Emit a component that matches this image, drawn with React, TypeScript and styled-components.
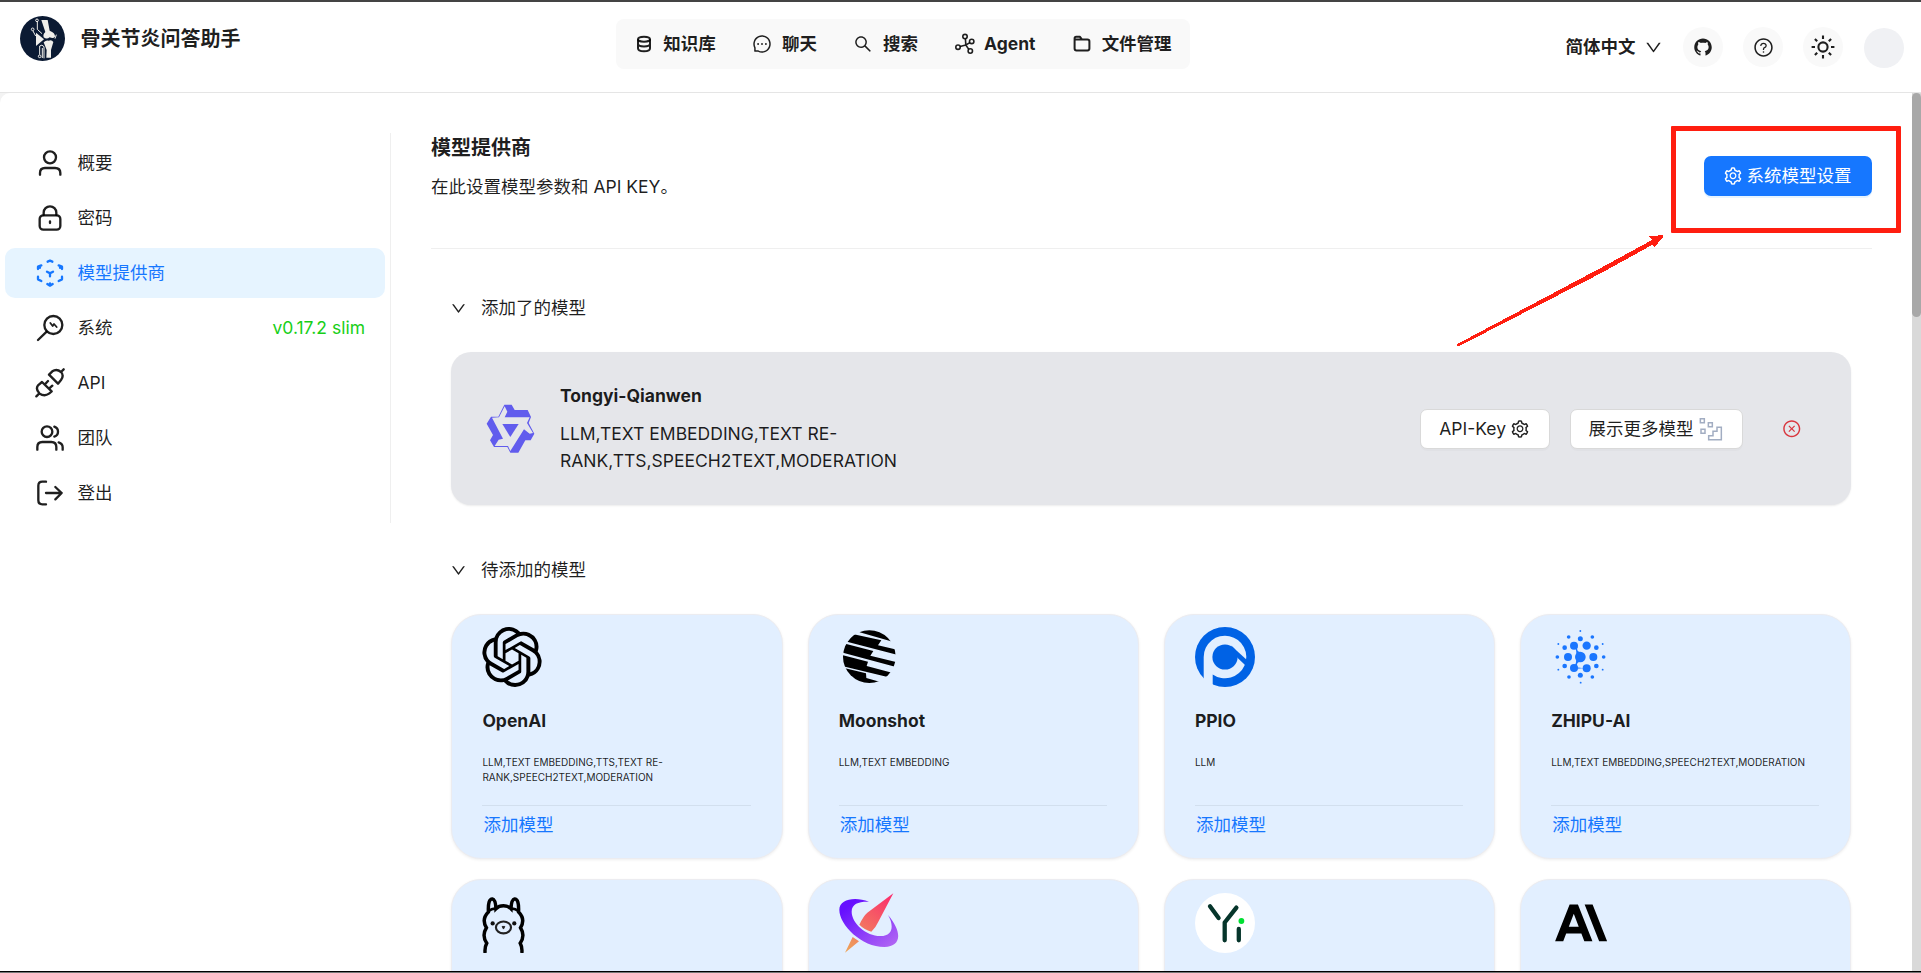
import React from 'react';
import styled, { createGlobalStyle } from 'styled-components';
import {
  AiOutlineMessage,
  AiOutlineSearch,
  AiOutlineDown,
  AiOutlineQuestionCircle,
  AiOutlineSetting,
  AiOutlineCloseCircle,
  AiFillGithub,
} from 'react-icons/ai';
import { SiOpenai } from 'react-icons/si';

const GlobalStyle = createGlobalStyle`
  * { box-sizing: border-box; }
  body {
    margin: 0;
    overflow: hidden;
    background: #fff;
    color: rgba(0, 0, 0, 0.88);
    font-family: Inter, "Noto Sans CJK SC", sans-serif;
    font-size: 17.5px;
    line-height: 27.5px;
  }
  svg { display: block; flex: none; }
`;

const Page = styled.div`
  position: relative;
  display: flex;
  flex-direction: column;
  width: 1921px;
  height: 973px;
  border-top: 2px solid #444;
  overflow: hidden;
`;

const Header = styled.header`
  display: flex;
  flex: none;
  align-items: flex-start;
  height: 91px;
  padding: 0 17px 0 20px;
  border-bottom: 1px solid #e5e5e5;
  background: #fff;
`;

const Brand = styled.div`
  display: flex;
  flex: none;
  align-items: flex-start;
  width: 596px;
  padding-top: 14px;
  gap: 15.5px;
`;

const BrandName = styled.span`
  font-size: 20px;
  font-weight: 600;
  line-height: 47px;
`;

const Nav = styled.nav`
  display: flex;
  flex: none;
  align-items: center;
  gap: 35.3px;
  width: 574px;
  height: 50px;
  margin-top: 17px;
  padding-left: 16.5px;
  border-radius: 8px;
  background: #f9f9f9;
`;

const NavItem = styled.a`
  display: flex;
  align-items: center;
  gap: 8.3px;
  font-weight: 700;
  white-space: nowrap;
`;

const NavIcon = styled.span`
  display: flex;
  align-items: center;
  justify-content: center;
  width: 22.5px;
  height: 22.5px;
`;

const Tools = styled.div`
  display: flex;
  align-items: center;
  gap: 20px;
  height: 90px;
  margin-left: auto;
`;

const Language = styled.div`
  display: flex;
  align-items: center;
  gap: 8.5px;
  font-weight: 600;
`;

const RoundButton = styled.button`
  display: flex;
  align-items: center;
  justify-content: center;
  width: 40px;
  height: 40px;
  padding: 0;
  border: 0;
  border-radius: 50%;
  color: rgba(0, 0, 0, 0.88);
  background: #f9f9f9;
`;

const Avatar = styled.span`
  width: 40px;
  height: 40px;
  margin: 2px 0 0 1px;
  border-radius: 50%;
  background: #f0f1f4;
`;

const Body = styled.div`
  display: flex;
  flex: 1;
  min-height: 0;
  background: #f3f3f3;
`;

const Panel = styled.div`
  display: flex;
  flex: 1;
  min-width: 0;
  border-radius: 10px 0 0 0;
  background: #fff;
`;

const Sidebar = styled.aside`
  display: flex;
  flex: none;
  flex-direction: column;
  gap: 5px;
  width: 391px;
  height: 390px;
  margin-top: 40px;
  padding: 5px 5px 0;
  border-right: 1px solid #efefef;
`;

const MenuItem = styled.div<{ $active?: boolean }>`
  display: flex;
  align-items: center;
  gap: 12.5px;
  height: 50px;
  padding: 0 20px 0 30px;
  border-radius: 10px;
  color: ${(p) => (p.$active ? '#1677ff' : 'rgba(0, 0, 0, 0.88)')};
  background: ${(p) => (p.$active ? '#e6f4ff' : 'transparent')};
`;

const Version = styled.span`
  margin-left: auto;
  color: #17cf17;
`;

const Main = styled.main`
  flex: none;
  width: 1481px;
  padding: 40px 0 0 40px;
`;

const TitleRow = styled.div`
  display: flex;
  justify-content: space-between;
  height: 116px;
  border-bottom: 1px solid #efefef;
`;

const Title = styled.h1`
  margin: 0;
  font-size: 20px;
  font-weight: 600;
  line-height: 30px;
`;

const Subtitle = styled.p`
  margin: 10px 0 0;
`;

const PrimaryButton = styled.button`
  display: flex;
  align-items: center;
  gap: 4px;
  height: 40px;
  margin-top: 23px;
  padding: 0 20.5px 0 18.5px;
  border: 0;
  border-radius: 7px;
  color: #fff;
  background: #1677ff;
  box-shadow: 0 2px 0 rgba(5, 145, 255, 0.1);
  font: inherit;
`;

const SectionHeader = styled.div<{ $top: number }>`
  display: flex;
  align-items: center;
  gap: 14px;
  height: 28px;
  padding: ${(p) => p.$top}px 0 30px 19px;
  box-sizing: content-box;
`;

const AddedCard = styled.section`
  display: flex;
  align-items: center;
  width: 1400px;
  height: 153px;
  margin-left: 20px;
  padding: 0 50px 0 34px;
  border-radius: 20px;
  background: #e5e6ea;
  box-shadow: 0 1px 2px rgba(0, 0, 0, 0.08);
`;

const AddedInfo = styled.div`
  width: 430px;
  margin-left: 25px;
`;

const ProviderName = styled.div`
  font-weight: 700;
`;

const ProviderTags = styled.div`
  margin-top: 10px;
  line-height: 27.75px;
`;

const Actions = styled.div`
  display: flex;
  align-items: center;
  gap: 20px;
  margin-left: auto;
`;

const DefaultButton = styled.button`
  display: flex;
  align-items: center;
  gap: 4px;
  height: 40px;
  padding: 0 18.5px 0 18px;
  border: 1px solid #d9d9d9;
  border-radius: 7px;
  color: rgba(0, 0, 0, 0.88);
  background: #fff;
  box-shadow: 0 2px 0 rgba(0, 0, 0, 0.02);
  font: inherit;
  white-space: nowrap;
`;

const RemoveButton = styled.span`
  display: flex;
  margin-left: 19px;
  color: #d9363e;
`;

const MoreIconSlot = styled.span`
  margin-left: 1.5px;
`;

const Grid = styled.div`
  display: grid;
  grid-template-columns: repeat(4, 331.25px);
  grid-auto-rows: 245px;
  gap: 20px 25px;
  margin-left: 20.4px;
`;

const ModelCard = styled.article`
  display: flex;
  flex-direction: column;
  padding: 12px 31px 0 30px;
  border: 1px solid #ececf0;
  border-radius: 30px;
  background: #e2efff;
  box-shadow: 0 1px 3px rgba(0, 0, 0, 0.07);
`;

const LogoBox = styled.div<{ $drop?: boolean }>`
  height: 60px;
  margin-top: ${(p) => (p.$drop ? 1 : 0)}px;
`;

const ModelName = styled.div`
  margin-top: 20px;
  font-weight: 700;
`;

const ModelTags = styled.div`
  height: 50.5px;
  margin-top: 20px;
  font-size: 10px;
  line-height: 15px;
`;

const CardDivider = styled.div`
  height: 1px;
  background: #d2dfee;
`;

const AddLink = styled.a`
  margin: 5px 0 0 1px;
  color: #1677ff;
`;

const ScrollTrack = styled.div`
  width: 9px;
  background: #d9d9d9;
`;

const ScrollThumb = styled.div`
  height: 224px;
  border-radius: 5px;
  background: #a8a8a8;
`;

const WindowEdge = styled.div`
  flex: none;
  height: 2px;
  border-top: 1px solid #000;
  background: #777;
`;

const Highlight = styled.div`
  position: absolute;
  top: 124px;
  left: 1671px;
  width: 230px;
  height: 107px;
  border: 5px solid #ff1e10;
  border-radius: 1px;
`;

const Arrow = styled.svg`
  position: absolute;
  top: 227px;
  left: 1455px;
`;

const MenuSvg = ({ y, children }: { y: number; children: React.ReactNode }) => (
  <svg width="30" height="30" viewBox={`105 ${y} 90 90`} fill="none" stroke="currentColor" strokeWidth="7" strokeLinecap="round" strokeLinejoin="round">
    {children}
  </svg>
);

const menu = [
  {
    label: '概要',
    icon: (
      <MenuSvg y={444}>
        <circle cx="150" cy="472" r="18" />
        <path d="M120 524V519Q120 504 135 504H165Q181 504 181 519V524" />
      </MenuSvg>
    ),
  },
  {
    label: '密码',
    icon: (
      <MenuSvg y={609}>
        <rect x="119" y="646" width="62" height="43" rx="11" />
        <path d="M131 645V638A19 19 0 0 1 169 638V645M150 664V669" />
      </MenuSvg>
    ),
  },
  {
    label: '模型提供商',
    active: true,
    icon: (
      <MenuSvg y={84}>
        <path d="M143 95L150 92L157 95M114 117V110L124 106M186 117V110L176 106M114 140V148L124 153M186 140V148L176 153M142 162L150 167L158 162M150 167V160M115 110L120 113M185 110L180 113M141 125L150 130L159 125M150 130V139" />
      </MenuSvg>
    ),
  },
  {
    label: '系统',
    version: 'v0.17.2 slim',
    icon: (
      <MenuSvg y={249}>
        <circle cx="160" cy="285" r="27" />
        <path d="M140 305L114 330" />
        <path d="M151 279L158 288L162 282L170 291" strokeWidth="5.5" />
      </MenuSvg>
    ),
  },
  {
    label: 'API',
    icon: (
      <MenuSvg y={414}>
        <path d="M147 434L174 461L183 450Q193 436 183 426Q170 415 157 424ZM183 426L191 418M126 456L155 484L147 491Q133 501 118 490Q106 477 114 466ZM118 490L109 499M135 463L144 453M147 476L157 467" />
      </MenuSvg>
    ),
  },
  {
    label: '团队',
    icon: (
      <MenuSvg y={579}>
        <circle cx="141" cy="605" r="16" />
        <path d="M163 590Q174 594 174 605Q174 616 163 620M112 659V651Q112 636 127 636H154Q169 636 169 651V659M176 637Q188 641 188 652V659" />
      </MenuSvg>
    ),
  },
  {
    label: '登出',
    icon: (
      <MenuSvg y={744}>
        <path d="M138 755H127Q115 755 115 767V811Q115 823 127 823H138M138 789H185M166 771L185 789L166 808" />
      </MenuSvg>
    ),
  },
];

const DatabaseIcon = () => (
  <svg width="18" height="18" viewBox="0 0 18 18" fill="none" stroke="currentColor" strokeWidth="2">
    <ellipse cx="9" cy="4.2" rx="6" ry="2.5" />
    <path d="M3 4.2V13.2Q3 16.2 9 16.2Q15 16.2 15 13.2V4.2M3 8.7Q3 11.4 9 11.4Q15 11.4 15 8.7" />
  </svg>
);

const AgentIcon = () => (
  <svg width="20" height="22" viewBox="0 0 20 22" fill="none" stroke="currentColor" strokeWidth="1.6">
    <circle cx="10" cy="3.6" r="2.2" />
    <circle cx="16.7" cy="8.4" r="2.2" />
    <circle cx="3" cy="14.2" r="2.2" />
    <circle cx="15.3" cy="18" r="2.2" />
    <path d="M10.4 5.8L10.8 11.4M14.8 9.6L10.8 12L13.8 16.4M5.1 13.5L10.8 12" />
  </svg>
);

const FolderIcon = () => (
  <svg width="18" height="18" viewBox="0 0 18 18" fill="none" stroke="currentColor" strokeWidth="2" strokeLinejoin="round">
    <path d="M1.6 3.4Q1.6 1.8 3.2 1.8H7L9 4.6H14.4Q16.4 4.6 16.4 6.4V13.6Q16.4 15.4 14.6 15.4H3.4Q1.6 15.4 1.6 13.6ZM1.8 4.6H9" />
  </svg>
);

const navItems = [
  { label: '知识库', icon: <DatabaseIcon /> },
  { label: '聊天', icon: <AiOutlineMessage size={20} /> },
  { label: '搜索', icon: <AiOutlineSearch size={20} /> },
  { label: 'Agent', icon: <AgentIcon /> },
  { label: '文件管理', icon: <FolderIcon /> },
];

const SunIcon = () => (
  <svg width="24" height="24" viewBox="0 0 24 24" fill="none" stroke="currentColor" strokeWidth="2.1">
    <circle cx="12" cy="12" r="4.6" />
    <path d="M12 .6V4M12 20V23.4M.6 12H4M20 12H23.4M3.9 3.9L6.2 6.2M17.8 17.8L20.1 20.1M3.9 20.1L6.2 17.8M17.8 6.2L20.1 3.9" />
  </svg>
);

const BrandLogo = () => (
  <svg width="45" height="45" viewBox="60 48 135 135">
    <circle cx="127.5" cy="115.5" r="67.5" fill="#0b1a33" />
    <g fill="#f0efeb">
      <path d="M124 60H143L149 92Q166 98 165 110Q160 117 149 112Q140 119 131 112Q128 103 136 96Z" />
      <path d="M131 127Q139 119 146 122Q155 118 160 126L153 150V173H139L140 150Z" />
      <path d="M108 98L132 118L108 138Z" />
    </g>
    <g fill="none" stroke="#f0efeb" strokeWidth="3">
      <circle cx="111" cy="61" r="4" />
      <circle cx="98" cy="88" r="4" />
      <circle cx="119" cy="169" r="4" />
      <path d="M112 66V88L126 101M99 93L107 108M119 164V138Q126 132 132 140V175M127 174V144M165 116L169 104" />
    </g>
  </svg>
);

const QwenLogo = () => (
  <svg width="50" height="50" viewBox="195 881 150 150">
    <path fill="#615ced" d="M253 883H275L284 899H323L333 920L326 938L343 970L332 990H316L295 1027H271L262 1010H222L210 990L219 974L200 940L213 919H235Z" />
    <path fill="#e5e6ea" d="M237 921L254 888L262 904L254 921H329L321 938L339 968L329 970L312 957L271 1022L264 1007H224L236 988L249 985L216 922Z" />
    <path fill="#615ced" d="M247 941H296L271 980Z" />
  </svg>
);

const MoonshotLogo = () => (
  <svg width="60" height="60" viewBox="26 51 180 180">
    <defs>
      <clipPath id="moon"><circle cx="117" cy="140" r="79" /></clipPath>
    </defs>
    <g clipPath="url(#moon)">
      <path d="M88 67L182 94V40H88ZM70 73L153 91L143 106L200 119V134L50 95ZM45 101L129 123L120 137L200 157V172L36 128ZM36 135L113 155L109 168L185 188L172 201L36 168ZM36 173L107 190L108 204L150 216V230H36Z" />
    </g>
  </svg>
);

const PpioLogo = () => (
  <svg width="60" height="60" viewBox="0 0 60 60">
    <circle cx="30" cy="30" r="30" fill="#0062e5" />
    <path fill="#e2efff" d="M8.7 51.3V30A21.3 21.3 0 1 1 17.7 47.4V60H8.7Z" />
    <circle cx="30" cy="30" r="12.6" fill="#0062e5" />
    <path fill="#0062e5" d="M36 18.4L53 34L50.6 38.6L42.6 31Z" />
  </svg>
);

const zhipuDots = [
  [121, 111, 16], [102, 77, 12], [140, 77, 12.5], [84, 111, 12], [160, 111, 12], [102, 144, 12], [140, 145, 12],
  [121, 56, 7.5], [121, 166, 7.5], [74, 83, 7], [169, 83, 7], [74, 138, 7], [169, 138, 7],
  [86, 51, 5.5], [157, 51, 5.5], [52, 111, 5.5], [191, 111, 5.5], [87, 171, 5.5], [157, 171, 5.5],
  [121, 33, 2.8], [122, 188, 2.8], [55, 72, 2.8], [188, 72, 2.8], [55, 149, 2.8], [188, 149, 2.8],
];

const ZhipuLogo = () => (
  <svg width="60" height="60" viewBox="33 21 180 180" fill="#1a76ff">
    {zhipuDots.map(([x, y, r]) => (
      <circle key={`${x}-${y}`} cx={x} cy={y} r={r} />
    ))}
    <path d="M105 80L112 80Q109 94 120 96L118 126Q108 128 112 142L102 140Q110 130 109 111Q110 90 105 80Z" />
    <path d="M112 141L130 145L112 148Z" opacity=".6" />
  </svg>
);

const OllamaLogo = () => (
  <svg width="60" height="60" viewBox="36 52 180 183" fill="none" stroke="#000" strokeWidth="10.5">
    <path d="M44 235Q42 218 49 205Q33 182 48 158Q32 132 54 110Q52 70 66 70Q76 72 77 100Q86 91 100 91Q114 91 123 100Q124 72 134 70Q148 70 146 110Q168 132 152 158Q167 182 151 205Q158 218 156 235" />
    <path d="M54 108Q66 98 77 100M146 108Q134 98 123 100" strokeWidth="8" />
    <ellipse cx="100" cy="157" rx="23" ry="18" stroke="#222" strokeWidth="6.5" />
    <path d="M96 154H104L100 162Z" stroke="#222" strokeWidth="3" fill="#222" />
    <circle cx="67" cy="145" r="6.5" fill="#111" stroke="none" />
    <circle cx="133" cy="145" r="6.5" fill="#111" stroke="none" />
  </svg>
);

const OrbitLogo = () => (
  <svg width="60" height="60" viewBox="1107 54 180 180">
    <defs>
      <linearGradient id="orbit" x1="0" y1="0" x2="1" y2="1">
        <stop offset=".15" stopColor="#6610ff" />
        <stop offset="1" stopColor="#b56bf2" />
      </linearGradient>
      <linearGradient id="rocket" gradientUnits="userSpaceOnUse" x1="1265" y1="60" x2="1130" y2="230">
        <stop offset="0" stopColor="#fb2d6c" />
        <stop offset="1" stopColor="#eda45a" />
      </linearGradient>
    </defs>
    <path fill="url(#orbit)" d="M1197 80C1155 64 1108 72 1108 104C1108 150 1175 216 1243 216C1298 214 1295 168 1254 120C1272 150 1270 183 1232 183C1190 184 1145 145 1145 110C1145 85 1168 79 1197 80Z" />
    <path fill="url(#rocket)" d="M1270 55L1192 113Q1180 123 1168 149Q1183 164 1204 170Q1217 158 1225 140ZM1148 186L1167 199L1125 233Z" />
  </svg>
);

const YiLogo = () => (
  <svg width="60" height="60" viewBox="0 0 60 60">
    <circle cx="30" cy="30" r="30" fill="#fff" />
    <path d="M15 13.3L23.6 25M41.4 14.6L29.7 29.5V47.3M43.8 36V47.3" fill="none" stroke="#06352b" strokeWidth="4.3" strokeLinecap="round" strokeLinejoin="round" />
    <circle cx="46.4" cy="28" r="2.9" fill="#00e032" />
  </svg>
);

const AnthropicLogo = () => (
  <svg width="60" height="60" viewBox="-1.9 -1.8 27.7 27.7">
    <path d="M17.304 3.541h-3.672l6.696 16.918H24ZM6.696 3.541L0 20.459h3.744l1.37-3.553h7.005l1.369 3.553h3.744L10.536 3.541Zm-.371 10.223l2.291-5.946 2.292 5.946Z" />
  </svg>
);

const MoreModelsIcon = () => (
  <svg width="24" height="24" viewBox="897 589 72 72" fill="none" stroke="#a2adc2" strokeWidth="4.5">
    <path d="M901 594H913V606H901ZM925 606H937V618H925ZM903 626H915V638H903ZM926 657H964V620H951V632H939V645H926Z" />
  </svg>
);

const models = [
  { name: 'OpenAI', tags: 'LLM,TEXT EMBEDDING,TTS,TEXT RE-RANK,SPEECH2TEXT,MODERATION', logo: <SiOpenai size={60} color="#000" /> },
  { name: 'Moonshot', tags: 'LLM,TEXT EMBEDDING', logo: <MoonshotLogo /> },
  { name: 'PPIO', tags: 'LLM', logo: <PpioLogo /> },
  { name: 'ZHIPU-AI', tags: 'LLM,TEXT EMBEDDING,SPEECH2TEXT,MODERATION', logo: <ZhipuLogo /> },
];

const moreLogos = [
  { id: 'ollama', logo: <OllamaLogo /> },
  { id: 'orbit', logo: <OrbitLogo /> },
  { id: 'yi', logo: <YiLogo /> },
  { id: 'anthropic', logo: <AnthropicLogo /> },
];

export default function App() {
  return (
    <Page>
      <GlobalStyle />
      <Header>
        <Brand>
          <BrandLogo />
          <BrandName>骨关节炎问答助手</BrandName>
        </Brand>
        <Nav>
          {navItems.map((item) => (
            <NavItem key={item.label}>
              <NavIcon>{item.icon}</NavIcon>
              {item.label}
            </NavItem>
          ))}
        </Nav>
        <Tools>
          <Language>
            简体中文
            <AiOutlineDown size={19} />
          </Language>
          <RoundButton><AiFillGithub size={20} /></RoundButton>
          <RoundButton><AiOutlineQuestionCircle size={21} /></RoundButton>
          <RoundButton><SunIcon /></RoundButton>
          <Avatar />
        </Tools>
      </Header>
      <Body>
        <Panel>
          <Sidebar>
            {menu.map((item) => (
              <MenuItem key={item.label} $active={item.active}>
                {item.icon}
                {item.label}
                {item.version && <Version>{item.version}</Version>}
              </MenuItem>
            ))}
          </Sidebar>
          <Main>
            <TitleRow>
              <div>
                <Title>模型提供商</Title>
                <Subtitle>在此设置模型参数和 API KEY。</Subtitle>
              </div>
              <PrimaryButton>
                <AiOutlineSetting size={20} />
                系统模型设置
              </PrimaryButton>
            </TitleRow>
            <SectionHeader $top={45}>
              <AiOutlineDown size={17} />
              添加了的模型
            </SectionHeader>
            <AddedCard>
              <QwenLogo />
              <AddedInfo>
                <ProviderName>Tongyi-Qianwen</ProviderName>
                <ProviderTags>
                  LLM,TEXT EMBEDDING,TEXT RE-<br />RANK,TTS,SPEECH2TEXT,MODERATION
                </ProviderTags>
              </AddedInfo>
              <Actions>
                <DefaultButton>
                  API-Key
                  <AiOutlineSetting size={20} />
                </DefaultButton>
                <DefaultButton>
                  展示更多模型
                  <MoreIconSlot><MoreModelsIcon /></MoreIconSlot>
                </DefaultButton>
                <RemoveButton><AiOutlineCloseCircle size={19.5} /></RemoveButton>
              </Actions>
            </AddedCard>
            <SectionHeader $top={51}>
              <AiOutlineDown size={17} />
              待添加的模型
            </SectionHeader>
            <Grid>
              {models.map((m) => (
                <ModelCard key={m.name}>
                  <LogoBox>{m.logo}</LogoBox>
                  <ModelName>{m.name}</ModelName>
                  <ModelTags>{m.tags}</ModelTags>
                  <CardDivider />
                  <AddLink>添加模型</AddLink>
                </ModelCard>
              ))}
              {moreLogos.map((m) => (
                <ModelCard key={m.id}>
                  <LogoBox $drop>{m.logo}</LogoBox>
                </ModelCard>
              ))}
            </Grid>
          </Main>
        </Panel>
        <ScrollTrack>
          <ScrollThumb />
        </ScrollTrack>
      </Body>
      <WindowEdge />
      <Highlight />
      <Arrow width="212" height="120" viewBox="165 24 636 360" shapeRendering="crispEdges">
        <path fill="#ff1e10" d="M170 370L600 142L756 57L747 46L789 42V48L764 78L758 71L600 158L174 377Z" />
      </Arrow>
    </Page>
  );
}
